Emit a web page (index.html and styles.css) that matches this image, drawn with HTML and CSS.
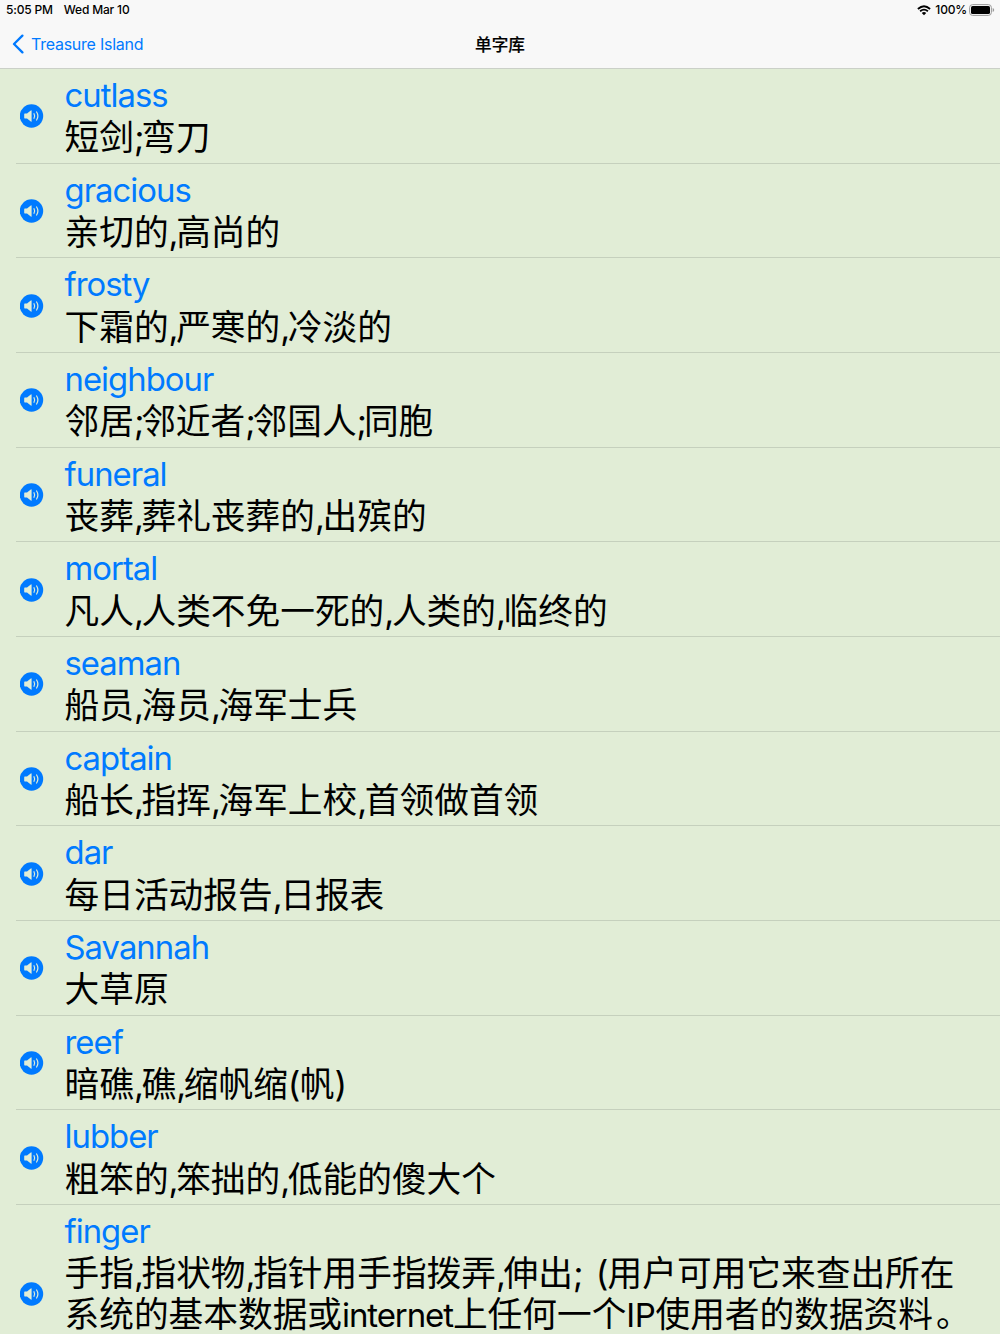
FILE: index.html
```
<!DOCTYPE html>
<html lang="zh-CN">
<head>
<meta charset="utf-8">
<title>单字库</title>
<link rel="stylesheet" href="styles.css">
</head>
<body>
<svg class="defs" width="0" height="0">
  <symbol id="speaker" viewBox="0 0 24 24">
    <circle cx="11.5" cy="12" r="11.7" fill="#007aff"/>
    <path d="M4.8 9.6H7l3.8-3.2q.8-.5.8.4v10.4q0 .9-.8.4L7 14.4H4.8q-.6 0-.6-.6v-3.6q0-.6.6-.6z" fill="#e1edd6"/>
    <path d="M14 9.7q1.3 2.3 0 4.6M16.6 8q2.6 4 0 8" fill="none" stroke="#e1edd6" stroke-width="1.2" stroke-linecap="round"/>
  </symbol>
</svg>
<header class="header">
  <div class="status">
    <span class="time">5:05 PM</span><span class="date">Wed Mar 10</span>
    <svg class="wifi" width="14" height="11" viewBox="0 0 14 11"><g fill="none" stroke="#000" stroke-width="1.8"><path d="M.9 4Q7-1.6 13.1 4M3.1 6.3q3.9-3.4 7.8 0"/></g><path d="M4.8 8q2.2-1.8 4.4 0L7 10.3z"/></svg>
    <span class="percent">100%</span>
    <svg class="battery" width="26" height="12" viewBox="0 0 26 12"><rect x=".6" y=".6" width="21.8" height="10.8" rx="3" fill="none" stroke="#999" stroke-width="1"/><rect x="2" y="2" width="19" height="8" rx="1.6"/><path d="M23.7 4q1.5.6 1.5 2t-1.5 2z" fill="#999"/></svg>
  </div>
  <nav class="nav">
    <a class="back"><svg width="12" height="20" viewBox="0 0 12 20"><path d="M10.4 1.6 2 10l8.4 8.4" fill="none" stroke="#007aff" stroke-width="2.3" stroke-linecap="round" stroke-linejoin="round"/></svg><span>Treasure Island</span></a>
    <h1 class="title">单字库</h1>
  </nav>
</header>
<main class="list">
  <article class="row"><svg class="icon"><use href="#speaker"/></svg><div class="entry"><div class="word">cutlass</div><div class="meaning">短剑<i class="semi">;</i>弯刀</div></div></article>
  <article class="row"><svg class="icon"><use href="#speaker"/></svg><div class="entry"><div class="word">gracious</div><div class="meaning">亲切的<i>,</i>高尚的</div></div></article>
  <article class="row"><svg class="icon"><use href="#speaker"/></svg><div class="entry"><div class="word">frosty</div><div class="meaning">下霜的<i>,</i>严寒的<i>,</i>冷淡的</div></div></article>
  <article class="row"><svg class="icon"><use href="#speaker"/></svg><div class="entry"><div class="word">neighbour</div><div class="meaning">邻居<i class="semi">;</i>邻近者<i class="semi">;</i>邻国人<i class="semi">;</i>同胞</div></div></article>
  <article class="row"><svg class="icon"><use href="#speaker"/></svg><div class="entry"><div class="word">funeral</div><div class="meaning">丧葬<i>,</i>葬礼丧葬的<i>,</i>出殡的</div></div></article>
  <article class="row"><svg class="icon"><use href="#speaker"/></svg><div class="entry"><div class="word">mortal</div><div class="meaning">凡人<i>,</i>人类不免一死的<i>,</i>人类的<i>,</i>临终的</div></div></article>
  <article class="row"><svg class="icon"><use href="#speaker"/></svg><div class="entry"><div class="word">seaman</div><div class="meaning">船员<i>,</i>海员<i>,</i>海军士兵</div></div></article>
  <article class="row"><svg class="icon"><use href="#speaker"/></svg><div class="entry"><div class="word">captain</div><div class="meaning">船长<i>,</i>指挥<i>,</i>海军上校<i>,</i>首领做首领</div></div></article>
  <article class="row"><svg class="icon"><use href="#speaker"/></svg><div class="entry"><div class="word">dar</div><div class="meaning">每日活动报告<i>,</i>日报表</div></div></article>
  <article class="row"><svg class="icon"><use href="#speaker"/></svg><div class="entry"><div class="word">Savannah</div><div class="meaning">大草原</div></div></article>
  <article class="row"><svg class="icon"><use href="#speaker"/></svg><div class="entry"><div class="word">reef</div><div class="meaning">暗礁<i>,</i>礁<i>,</i>缩帆缩<i class="paren">(</i>帆<i class="paren">)</i></div></div></article>
  <article class="row"><svg class="icon"><use href="#speaker"/></svg><div class="entry"><div class="word">lubber</div><div class="meaning">粗笨的<i>,</i>笨拙的<i>,</i>低能的傻大个</div></div></article>
  <article class="row row-tall"><svg class="icon"><use href="#speaker"/></svg><div class="entry"><div class="word">finger</div><div class="meaning">手指<i>,</i>指状物<i>,</i>指针用手指拨弄<i>,</i>伸出<i class="semi">;</i><span class="gap"> </span><i class="paren">(</i>用户可用它来查出所在<br>系统的基本数据或<span class="latin">internet</span>上任何一个<span class="latin initials">IP</span>使用者的数据资料<span class="stop">。</span></div></div></article>
</main>
</body>
</html>
```
FILE: styles.css
```
* { box-sizing: border-box; }
body {
  margin: 0;
  height: 1334px;
  overflow: hidden;
  background: #e1edd6;
  color: #000;
  font-family: Inter, "Noto Sans CJK SC", sans-serif;
}
.defs { display: block; }
.header {
  height: 69px;
  background: #f8f8f8;
  border-bottom: 1px solid #cbd0c8;
}
.status {
  display: flex;
  align-items: center;
  height: 20px;
  padding: 0 5px 0 6px;
  font-size: 12px;
  font-weight: 500;
  line-height: 20px;
  letter-spacing: -0.18px;
}
.date { margin-left: 11px; }
.wifi { margin-left: auto; }
.percent { margin: 0 2px 0 4px; }
.nav {
  display: grid;
  grid-template-columns: 1fr auto 1fr;
  align-items: center;
  height: 48px;
}
.back {
  display: flex;
  align-items: center;
  gap: 7px;
  padding-left: 12px;
  color: #007aff;
  font-size: 16px;
  letter-spacing: -0.25px;
}
.title {
  margin: 0;
  padding-top: 1px;
  font-size: 16.6px;
  font-weight: 500;
  line-height: 24px;
  -webkit-text-stroke: 0.2px #000;
}
.row {
  display: flex;
  align-items: center;
  height: 94.67px;
  padding-left: 20px;
  background: linear-gradient(#c5d0bd, #c5d0bd) 16px 100% / 100% 1px no-repeat;
}
.row-tall { height: 177.3px; background: none; }
.icon { width: 24px; height: 24px; flex: none; overflow: visible; }
.entry { margin-left: 20.5px; align-self: flex-start; padding-top: 6px; }
.word, .meaning { white-space: nowrap; }
.word {
  height: 42.3px;
  line-height: 41.3px;
  color: #007aff;
  font-size: 32.8px;
  letter-spacing: -0.95px;
}
.meaning { font-size: 34.7px; line-height: 41.3px; }
.meaning i { font-style: normal; letter-spacing: -2.4px; }
.meaning .semi { letter-spacing: -3.2px; }
.meaning .paren { letter-spacing: -0.8px; }
.gap { display: inline-block; width: 15.5px; }
.latin { font-size: 33px; letter-spacing: -1.1px; }
.initials { letter-spacing: -0.4px; }
.stop { margin-left: 3px; }
```
